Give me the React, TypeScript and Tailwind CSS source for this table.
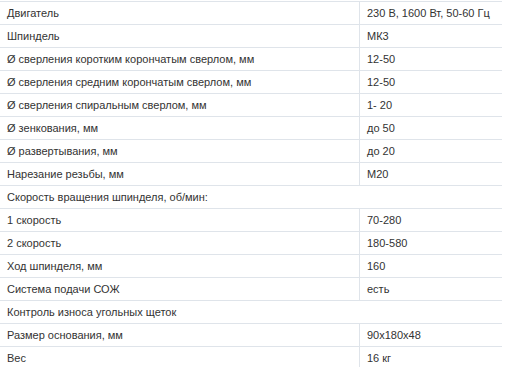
const rows: [string, string | null][] = [
  ["Двигатель", "230 В, 1600 Вт, 50-60 Гц"],
  ["Шпиндель", "МК3"],
  ["Ø сверления коротким корончатым сверлом, мм", "12-50"],
  ["Ø сверления средним корончатым сверлом, мм", "12-50"],
  ["Ø сверления спиральным сверлом, мм", "1- 20"],
  ["Ø зенкования, мм", "до 50"],
  ["Ø развертывания, мм", "до 20"],
  ["Нарезание резьбы, мм", "M20"],
  ["Скорость вращения шпинделя, об/мин:", null],
  ["1 скорость", "70-280"],
  ["2 скорость", "180-580"],
  ["Ход шпинделя, мм", "160"],
  ["Система подачи СОЖ", "есть"],
  ["Контроль износа угольных щеток", null],
  ["Размер основания, мм", "90x180x48"],
  ["Вес", "16 кг"],
]

export default function App() {
  return (
    <div className="w-[532px] h-[367px] overflow-hidden bg-white font-['Liberation_Sans',Arial,sans-serif] text-[11px] text-[#333333]">
      <div className="w-[502px] mt-[1px] border-t border-[#dfe4ea]">
        {rows.map(([label, value]) =>
          value === null ? (
            <div
              key={label}
              className="h-[23px] flex items-center pl-[7px] border-b border-[#dfe4ea]"
            >
              {label}
            </div>
          ) : (
            <div
              key={label}
              className="h-[23px] grid grid-cols-[360px_1fr] border-b border-[#dfe4ea]"
            >
              <div className="flex items-center pl-[7px] border-r border-[#dfe4ea]">
                {label}
              </div>
              <div className="flex items-center pl-[7px]">{value}</div>
            </div>
          )
        )}
      </div>
    </div>
  )
}
